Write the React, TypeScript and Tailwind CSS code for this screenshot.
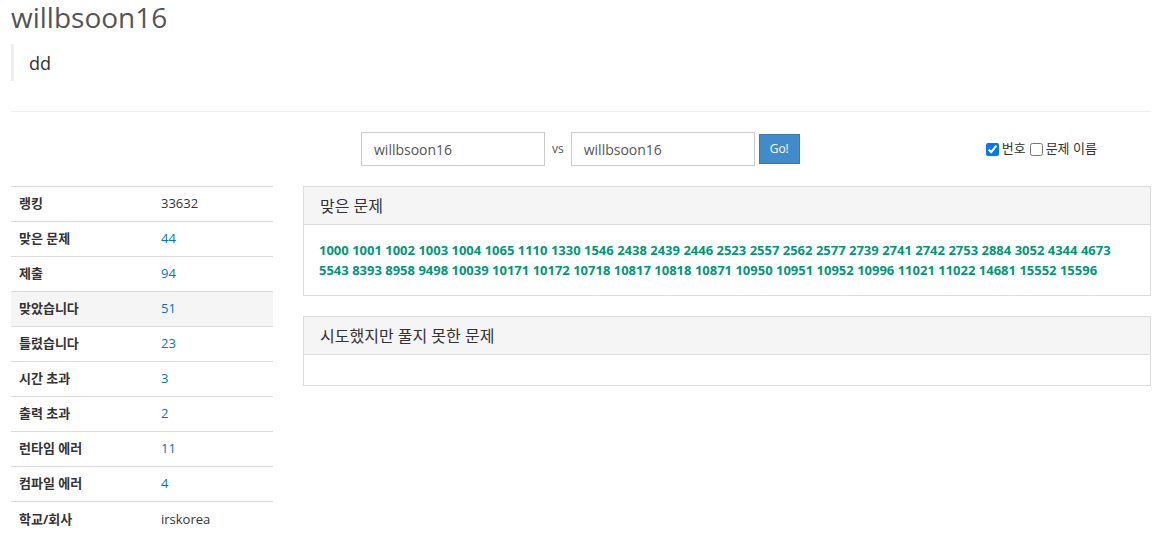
import React from "react";

const font = { fontFamily: '"Open Sans", "Noto Sans CJK KR", sans-serif' };

const rows: { label: string; value: string; link?: boolean; hl?: boolean }[] = [
  { label: "랭킹", value: "33632" },
  { label: "맞은 문제", value: "44", link: true },
  { label: "제출", value: "94", link: true },
  { label: "맞았습니다", value: "51", link: true, hl: true },
  { label: "틀렸습니다", value: "23", link: true },
  { label: "시간 초과", value: "3", link: true },
  { label: "출력 초과", value: "2", link: true },
  { label: "런타임 에러", value: "11", link: true },
  { label: "컴파일 에러", value: "4", link: true },
  { label: "학교/회사", value: "irskorea" },
];

const solved =
  "1000 1001 1002 1003 1004 1065 1110 1330 1546 2438 2439 2446 2523 2557 2562 2577 2739 2741 2742 2753 2884 3052 4344 4673 5543 8393 8958 9498 10039 10171 10172 10718 10817 10818 10871 10950 10951 10952 10996 11021 11022 14681 15552 15596".split(
    " "
  );

export default function App() {
  return (
    <div className="bg-white text-[#333] w-[1159px] h-[539px] overflow-hidden" style={font}>
      <div className="pl-[11px] pr-[8px]">
        <h1 className="text-[28px] leading-[34px] text-[#555] m-0 whitespace-nowrap">willbsoon16</h1>
        <blockquote className="mt-[10px] border-l-[3px] border-[#eee] pl-[15px] pt-[1px] text-[18px] leading-[36px] text-[#333]">
          dd
        </blockquote>
        <hr className="mt-[30px] border-t border-[#eee]" />

        <div className="flex items-center mt-[20px] h-[34px]">
          <input
            className="ml-[350px] w-[184px] h-[34px] border border-[#ccc] px-[12px] text-[14px] text-[#555] outline-none"
            defaultValue="willbsoon16"
            style={font}
          />
          <span className="mx-[7px] text-[12px] text-[#555]">vs</span>
          <input
            className="w-[184px] h-[34px] border border-[#ccc] px-[12px] text-[14px] text-[#555] outline-none"
            defaultValue="willbsoon16"
            style={font}
          />
          <button className="ml-[4px] w-[41px] h-[30px] bg-[#428bca] border border-[#3a7ab2] text-white text-[12px]">
            Go!
          </button>
          <div className="ml-[186px] flex items-center text-[13px] text-[#333]">
            <input type="checkbox" defaultChecked className="w-[13px] h-[13px] mr-[3px] accent-[#0075ff]" />
            <span>번호</span>
            <input type="checkbox" className="w-[13px] h-[13px] ml-[4px] mr-[3px]" />
            <span>문제 이름</span>
          </div>
        </div>

        <div className="flex mt-[20px]">
          <div className="w-[262px] shrink-0">
            <table className="w-full text-[13px] border-collapse">
              <tbody>
                {rows.map((r) => (
                  <tr key={r.label} className={`h-[35px] border-t border-[#ddd] ${r.hl ? "bg-[#f5f5f5]" : ""}`}>
                    <th className="text-left font-bold pl-[8px] w-[150px] text-[#333]">{r.label}</th>
                    <td className={r.link ? "text-[#0076c0]" : "text-[#333]"}>{r.value}</td>
                  </tr>
                ))}
              </tbody>
            </table>
          </div>
          <div className="ml-[30px] flex-1">
            <div className="border border-[#ddd] bg-white">
              <div className="h-[38px] bg-[#f5f5f5] border-b border-[#ddd] px-[16px] flex items-center text-[16px] text-[#333]">
                맞은 문제
              </div>
              <div className="px-[15px] pt-[15px] pb-[15px] text-[13px] leading-[20px] font-bold text-[#009874]">
                {solved.map((s, i) => (
                  <React.Fragment key={s}>
                    <span>{s}</span>
                    {i < solved.length - 1 ? " " : ""}
                  </React.Fragment>
                ))}
              </div>
            </div>
            <div className="mt-[20px] border border-[#ddd] bg-white">
              <div className="h-[38px] bg-[#f5f5f5] border-b border-[#ddd] px-[16px] flex items-center text-[16px] text-[#333]">
                시도했지만 풀지 못한 문제
              </div>
              <div className="h-[30px]" />
            </div>
          </div>
        </div>
      </div>
    </div>
  );
}
